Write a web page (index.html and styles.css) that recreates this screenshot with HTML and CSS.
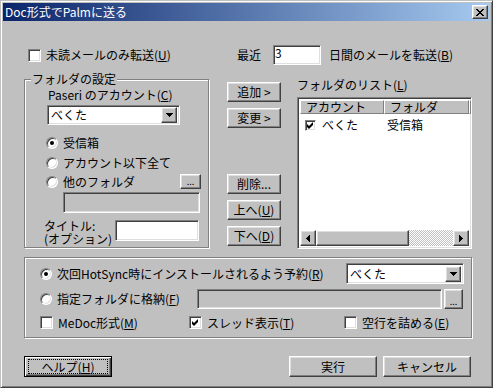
FILE: index.html
```html
<!DOCTYPE html>
<html lang="ja">
<head>
    <meta charset="UTF-8">
    <title>Doc形式でPalmに送る</title>
    <link rel="stylesheet" href="styles.css">
</head>
<body>
    <div class="window">
        <div class="titlebar">
            <span class="title">Doc形式でPalmに送る</span>
            <span class="raised close">
                <svg width="8" height="7" viewBox="0 0 8 7" shape-rendering="crispEdges"><path d="M0 0h2v1h-2z M6 0h2v1h-2z M1 1h2v1h-2z M5 1h2v1h-2z M2 2h4v1h-4z M3 3h2v1h-2z M2 4h4v1h-4z M1 5h2v1h-2z M5 5h2v1h-2z M0 6h2v1h-2z M6 6h2v1h-2z" fill="#000"/></svg>
            </span>
        </div>

        <div class="client">
            <!-- 上段 -->
            <div class="top-row">
                <div class="check-item unread"><span class="chk"></span><span>未読メールのみ転送(<u>U</u>)</span></div>
                <span class="recent">最近</span>
                <span class="sunken days">3</span>
                <span class="days-label">日間のメールを転送(<u>B</u>)</span>
            </div>

            <div class="middle">
                <!-- フォルダの設定 -->
                <div class="group folder-group">
                    <div class="legend">フォルダの設定</div>
                    <div class="paseri">Paseri のアカウント(<u>C</u>)</div>
                    <div class="sunken combo account">
                        <span class="combo-text">べくた</span>
                        <span class="raised drop">
                            <svg width="7" height="4" viewBox="0 0 7 4" shape-rendering="crispEdges"><path d="M0 0h7v1h-1v1h-1v1h-1v1h-1v-1h-1v-1h-1v-1h-1z" fill="#000"/></svg>
                        </span>
                    </div>
                    <div class="opt inbox"><span class="radio on"></span><span>受信箱</span></div>
                    <div class="opt below"><span class="radio"></span><span>アカウント以下全て</span></div>
                    <div class="opt other"><span class="radio"></span><span>他のフォルダ</span><span class="raised dots">...</span></div>
                    <div class="sunken other-path"></div>
                    <div class="title-row">
                        <div class="title-label"><div>タイトル:</div><div>(オプション)</div></div>
                        <div class="sunken title-edit"></div>
                    </div>
                </div>

                <div class="side-buttons">
                    <span class="raised btn add">追加 &gt;</span>
                    <span class="raised btn change">変更 &gt;</span>
                    <span class="raised btn remove">削除...</span>
                    <span class="raised btn up"><span>上へ(<u>U</u>)</span></span>
                    <span class="raised btn down"><span>下へ(<u>D</u>)</span></span>
                </div>

                <!-- フォルダのリスト -->
                <div class="list-col">
                    <div class="list-label">フォルダのリスト(<u>L</u>)</div>
                    <div class="sunken listview">
                        <div class="list-head">
                            <span class="raised head-cell account-col">アカウント</span>
                            <span class="raised head-cell folder-col">フォルダ</span>
                            <span class="raised head-cell rest"></span>
                        </div>
                        <div class="list-row">
                            <span class="row-account">
                                <span class="chk small">
                                    <svg width="7" height="7" viewBox="0 0 7 7"><path d="M0 2L2 4L6 0L6 3L2 7L0 5Z" fill="#000"/></svg>
                                </span><span>べくた</span>
                            </span>
                            <span>受信箱</span>
                        </div>
                        <div class="list-space"></div>
                        <div class="hscroll">
                            <span class="raised arrow">
                                <svg width="4" height="7" viewBox="0 0 4 7" shape-rendering="crispEdges"><path d="M3 0h1v7h-1v-1h-1v-1h-1v-1h-1v-1h1v-1h1v-1h1z" fill="#000"/></svg>
                            </span>
                            <span class="raised thumb"></span>
                            <span class="track"></span>
                            <span class="raised arrow">
                                <svg width="4" height="7" viewBox="0 0 4 7" shape-rendering="crispEdges"><path d="M0 0h1v1h1v1h1v1h1v1h-1v1h-1v1h-1v1h-1z" fill="#000"/></svg>
                            </span>
                        </div>
                    </div>
                </div>
            </div>

            <!-- 転送方法 -->
            <div class="group send-group">
                <div class="send-row row-a">
                    <div class="opt cell-a"><span class="radio on"></span><span>次回HotSync時にインストールされるよう予約(<u>R</u>)</span></div>
                    <div class="sunken combo device">
                        <span class="combo-text">べくた</span>
                        <span class="raised drop">
                            <svg width="7" height="4" viewBox="0 0 7 4" shape-rendering="crispEdges"><path d="M0 0h7v1h-1v1h-1v1h-1v1h-1v-1h-1v-1h-1v-1h-1z" fill="#000"/></svg>
                        </span>
                    </div>
                </div>
                <div class="send-row row-b">
                    <div class="opt cell-b"><span class="radio"></span><span>指定フォルダに格納(<u>F</u>)</span></div>
                    <div class="sunken save-path"></div>
                    <span class="raised dots save-dots">...</span>
                </div>
                <div class="send-row row-c">
                    <div class="check-item cell-c1"><span class="chk"></span><span>MeDoc形式(<u>M</u>)</span></div>
                    <div class="check-item cell-c2">
                        <span class="chk">
                            <svg width="7" height="7" viewBox="0 0 7 7"><path d="M0 2L2 4L6 0L6 3L2 7L0 5Z" fill="#000"/></svg>
                        </span><span>スレッド表示(<u>T</u>)</span>
                    </div>
                    <div class="check-item"><span class="chk"></span><span>空行を詰める(<u>E</u>)</span></div>
                </div>
            </div>

            <div class="footer">
                <span class="btn wide default"><span class="focus"><span>ヘルプ(<u>H</u>)</span></span></span>
                <span class="raised btn wide run">実行</span>
                <span class="raised btn wide cancel">キャンセル</span>
            </div>
        </div>
    </div>
</body>
</html>
```

FILE: styles.css
```css
* {
    margin: 0;
    padding: 0;
    box-sizing: border-box;
}

body {
    width: 493px;
    height: 388px;
    overflow: hidden;
    background: #c0c0c0;
    color: #000;
    font-family: "Noto Sans CJK JP", "Liberation Sans", sans-serif;
    font-size: 12px;
    line-height: 12px;
    text-autospace: no-autospace;
}

u {
    text-underline-offset: 1px;
}

.window {
    width: 493px;
    height: 388px;
    padding: 2px;
    border: 1px solid;
    border-color: #c0c0c0 #404040 #404040 #c0c0c0;
    box-shadow: inset 1px 1px #fff, inset -1px -1px #808080;
}

/* タイトルバー */
.titlebar {
    height: 18px;
    padding: 0 2px;
    display: flex;
    align-items: center;
    justify-content: space-between;
    background: linear-gradient(to right, #0a246a, #a6caf0);
    color: #fff;
}

.close {
    width: 16px;
    height: 14px;
}

/* 3D部品 */
.raised {
    display: flex;
    align-items: center;
    justify-content: center;
    flex: none;
    background: #c0c0c0;
    border: 1px solid;
    border-color: #fff #404040 #404040 #fff;
    box-shadow: inset -1px -1px #808080, inset 1px 1px #dfdfdf;
}

.sunken {
    flex: none;
    background: #fff;
    border: 1px solid;
    border-color: #808080 #fff #fff #808080;
    box-shadow: inset 1px 1px #404040, inset -1px -1px #dfdfdf;
}

.chk {
    width: 13px;
    height: 13px;
    display: flex;
    align-items: center;
    justify-content: center;
    flex: none;
    background: #fff;
    border: 1px solid;
    border-color: #808080 #fff #fff #808080;
    box-shadow: inset 1px 1px #404040, inset -1px -1px #dfdfdf;
}

.chk.small {
    width: 11px;
    height: 11px;
}

.radio {
    width: 12px;
    height: 12px;
    display: flex;
    align-items: center;
    justify-content: center;
    flex: none;
    border-radius: 50%;
    background: #fff;
    border: 1px solid;
    border-color: #808080 #fff #fff #808080;
    box-shadow: inset 1px 1px #404040, inset -1px -1px #dfdfdf;
}

.radio.on::after {
    content: "";
    width: 4px;
    height: 4px;
    border-radius: 50%;
    background: #000;
}

.check-item,
.opt {
    display: flex;
    align-items: center;
    gap: 5px;
    white-space: nowrap;
}

.combo {
    display: flex;
    align-items: center;
    padding: 2px;
}

.combo-text {
    flex: 1;
    padding-left: 1px;
}

.drop {
    width: 16px;
    height: 16px;
}

.dots {
    font-size: 9px;
    line-height: 9px;
    align-items: flex-end;
    padding-bottom: 2px;
}

.btn {
    width: 54px;
    height: 20px;
    white-space: nowrap;
}

/* 上段 */
.top-row {
    margin-top: 24px;
    height: 20px;
    display: flex;
    align-items: center;
}

.unread {
    margin-left: 25px;
    width: 209px;
}

.recent {
    width: 36px;
}

.days {
    width: 48px;
    height: 20px;
    padding: 1px 1px 0;
}

.days-label {
    margin-left: 8px;
}

/* 中段 */
.middle {
    margin-top: 14px;
    display: flex;
    align-items: flex-start;
}

.group {
    border: 1px solid #808080;
    box-shadow: inset 1px 1px #fff, 1px 1px #fff;
}

.folder-group {
    margin-left: 21px;
    width: 185px;
    height: 169px;
}

.legend {
    width: fit-content;
    margin: -7px 0 0 6px;
    padding: 0 1px;
    background: #c0c0c0;
}

.paseri {
    margin: 4px 0 0 23px;
}

.account {
    margin: 4px 0 0 22px;
    width: 133px;
    height: 20px;
}

.folder-group .opt {
    margin-left: 21px;
    height: 13px;
}

.inbox {
    margin-top: 11px;
}

.below {
    margin-top: 7px;
}

.folder-group .other {
    margin-top: 5px;
    width: 155px;
    height: 15px;
}

.other .dots {
    margin-left: auto;
    width: 21px;
    height: 15px;
}

.other-path {
    margin: 3px 0 0 38px;
    width: 137px;
    height: 21px;
    background: #c0c0c0;
}

.title-row {
    margin: 6px 0 0 19px;
    display: flex;
    align-items: flex-start;
}

.title-label {
    width: 71px;
    line-height: 13px;
}

.title-edit {
    margin-top: 1px;
    width: 84px;
    height: 21px;
}

.side-buttons {
    margin-left: 18px;
    padding-top: 3px;
    display: flex;
    flex-direction: column;
}

.change,
.up,
.down {
    margin-top: 6px;
}

.remove {
    margin-top: 46px;
}

.list-col {
    margin-left: 16px;
    width: 175px;
}

.listview {
    margin-top: 6px;
    height: 152px;
    padding: 2px;
    display: flex;
    flex-direction: column;
}

.list-head {
    display: flex;
    height: 14px;
}

.head-cell {
    justify-content: flex-start;
    padding-left: 5px;
    border-color: #fff #808080 #808080 #fff;
    box-shadow: none;
}

.account-col {
    width: 84px;
}

.folder-col {
    width: 85px;
}

.rest {
    flex: 1;
    padding: 0;
}

.list-row {
    margin-top: 4px;
    height: 14px;
    display: flex;
    align-items: center;
}

.row-account {
    width: 87px;
    padding-left: 5px;
    display: flex;
    align-items: center;
    gap: 6px;
}

.list-space {
    flex: 1;
}

.hscroll {
    height: 16px;
    display: flex;
}

.arrow {
    width: 16px;
    height: 16px;
}

.thumb {
    width: 93px;
    height: 16px;
}

.track {
    flex: 1;
    background: repeating-conic-gradient(#fff 0 25%, #c0c0c0 0 50%) 0 0 / 2px 2px;
}

/* 転送方法 */
.send-group {
    margin: 8px 0 0 21px;
    width: 448px;
    height: 81px;
    padding-left: 15px;
}

.send-row {
    display: flex;
    align-items: center;
}

.row-a {
    margin-top: 5px;
    height: 21px;
}

.cell-a {
    width: 306px;
}

.device {
    width: 118px;
    height: 21px;
}

.row-b {
    margin-top: 5px;
    height: 20px;
}

.cell-b {
    width: 157px;
}

.save-path {
    width: 245px;
    height: 20px;
    background: #c0c0c0;
}

.save-dots {
    margin-left: 2px;
    width: 19px;
    height: 20px;
}

.row-c {
    margin-top: 7px;
    height: 13px;
}

.cell-c1 {
    width: 149px;
}

.cell-c2 {
    width: 155px;
}

/* ボタン */
.footer {
    margin-top: 18px;
    padding: 0 19px 0 21px;
    display: flex;
    gap: 6px;
}

.wide {
    width: 88px;
    height: 21px;
}

.default {
    display: flex;
    align-items: center;
    justify-content: center;
    border: 1px solid #000;
    box-shadow: inset 1px 1px #fff, inset -1px -1px #404040, inset -2px -2px #808080;
}

.focus {
    width: 80px;
    height: 15px;
    display: flex;
    align-items: center;
    justify-content: center;
    border: 1px dotted #000;
}

.run {
    margin-left: auto;
}
```
